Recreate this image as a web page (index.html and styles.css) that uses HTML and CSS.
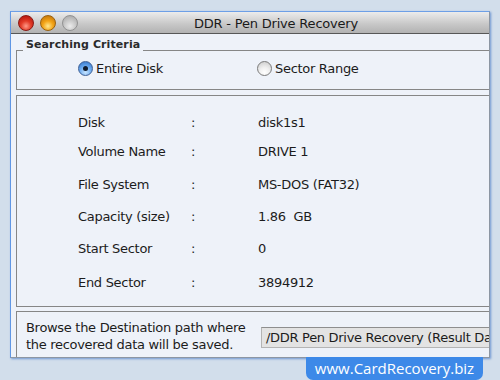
FILE: index.html
```html
<!DOCTYPE html>
<html>
<head>
<meta charset="utf-8">
<link rel="stylesheet" href="styles.css">
</head>
<body>
<div class="window">
  <div class="titlebar">
    <div class="lights">
      <span class="light red"></span>
      <span class="light orange"></span>
      <span class="light gray"></span>
    </div>
    <div class="title">DDR - Pen Drive Recovery</div>
  </div>
  <div class="content">
    <fieldset class="criteria">
      <legend>Searching Criteria</legend>
      <div class="radios">
        <label class="radio-item first"><span class="radio on"></span>Entire Disk</label>
        <label class="radio-item"><span class="radio"></span>Sector Range</label>
      </div>
    </fieldset>
    <div class="panel info">
      <div class="grid">
        <div>Disk</div><div>:</div><div>disk1s1</div>
        <div>Volume Name</div><div>:</div><div>DRIVE 1</div>
        <div>File System</div><div>:</div><div>MS-DOS (FAT32)</div>
        <div>Capacity (size)</div><div>:</div><div>1.86&nbsp; GB</div>
        <div>Start Sector</div><div>:</div><div>0</div>
        <div>End Sector</div><div>:</div><div>3894912</div>
      </div>
    </div>
    <div class="panel dest">
      <div class="dest-text">Browse the Destination path where<br>the recovered data will be saved.</div>
      <div class="path-field">/DDR Pen Drive Recovery (Result Da</div>
    </div>
  </div>
</div>
<div class="banner">www.CardRecovery.biz</div>
</body>
</html>
```
FILE: styles.css
```css
html, body {
  margin: 0;
  padding: 0;
}
body {
  width: 500px;
  height: 380px;
  overflow: hidden;
  background: #d2deeb;
  font-family: "DejaVu Sans", "Liberation Sans", sans-serif;
  font-size: 13px;
  letter-spacing: -0.3px;
  color: #1c1c1c;
  position: relative;
}
.window {
  margin: 11px 0 0 10px;
  width: 478px;
  height: 345px;
  border-top: 1px solid #6d9fe6;
  border-left: 1px solid #5f96e4;
  border-right: 1px solid #8c96a3;
  border-bottom: 1px solid #8c96a3;
  box-shadow: 1px 1px 2px rgba(70, 120, 200, 0.7);
  background: #eef2f9;
  display: flex;
  flex-direction: column;
  overflow: hidden;
}
.titlebar {
  height: 21px;
  flex: none;
  border-bottom: 1px solid #575757;
  background: linear-gradient(#ececec, #c9c9c9 55%, #b2b2b2);
  position: relative;
  display: flex;
  align-items: center;
  justify-content: center;
}
.lights {
  position: absolute;
  left: 7px;
  top: 3px;
  display: flex;
  gap: 6px;
}
.light {
  width: 16px;
  height: 16px;
  border-radius: 50%;
  box-sizing: border-box;
}
.light.red {
  background: radial-gradient(circle at 50% 72%, #ff9a88 0%, #e23a26 42%, #a80c08 100%);
  border: 1px solid #8a1a14;
}
.light.orange {
  background: radial-gradient(circle at 50% 72%, #ffe890 0%, #f3a417 42%, #b86a06 100%);
  border: 1px solid #9a6210;
}
.light.gray {
  background: radial-gradient(circle at 50% 72%, #ececec 0%, #c6c6c6 50%, #a0a0a0 100%);
  border: 1px solid #929292;
}
.title {
  font-size: 13px;
  color: #1a1a1a;
  letter-spacing: -0.2px;
  padding-top: 1px;
  padding-left: 52px;
}
.content {
  flex: 1;
  padding: 0 0 0 5px;
  display: flex;
  flex-direction: column;
}
.criteria {
  margin: 5px -2px 0 0;
  padding: 0;
  border: 1px solid #868686;
  border-right: none;
  height: 49px;
  box-sizing: content-box;
}
.criteria legend {
  font-size: 11px;
  font-weight: bold;
  color: #2a2a2a;
  line-height: 12px;
  padding: 0 3px 10px 3px;
  margin-left: 6px;
  letter-spacing: 0.1px;
}
.radios {
  display: flex;
  align-items: center;
  height: 38px;
  margin-top: -12px;
}
.radio-item {
  display: flex;
  align-items: center;
  gap: 3px;
}
.radio-item.first {
  margin-left: 61px;
  width: 179px;
}
.radio {
  width: 15px;
  height: 15px;
  border-radius: 50%;
  box-sizing: border-box;
  border: 1px solid #7a7a7a;
  background: radial-gradient(circle at 50% 80%, #ffffff 0%, #f0f0f0 40%, #c8c8c8 100%);
  position: relative;
}
.radio.on {
  border-color: #3d5f95;
  background: radial-gradient(circle at 50% 80%, #c6e4ff 0%, #6aa9ef 50%, #2d6fc4 100%);
}
.radio.on::after {
  content: "";
  position: absolute;
  left: 4px;
  top: 4px;
  width: 5px;
  height: 5px;
  border-radius: 50%;
  background: #111c2c;
}
.panel {
  border: 1px solid #868686;
  border-right: none;
  margin-right: -2px;
}
.info {
  margin-top: 5px;
  height: 212px;
  padding: 12px 0 0 61px;
  box-sizing: border-box;
}
.grid {
  display: grid;
  grid-template-columns: 113px 67px auto;
  grid-template-rows: 28px 31px 34px 31px 33px 34px;
  align-items: center;
}
.dest {
  margin-top: 4px;
  flex: 1;
  border-bottom: none;
  display: flex;
  align-items: flex-start;
  padding-left: 9px;
  padding-top: 7px;
}
.dest-text {
  width: 235px;
  line-height: 17px;
  flex: none;
}
.path-field {
  flex: none;
  width: 240px;
  height: 21px;
  margin-top: 8px;
  box-sizing: border-box;
  background: #e3e3e3;
  border: 1px solid #b4b4b4;
  border-top-color: #8e8e8e;
  padding-left: 4px;
  line-height: 19px;
  white-space: nowrap;
  overflow: hidden;
}
.banner {
  position: absolute;
  left: 306px;
  top: 357px;
  width: 177px;
  height: 23px;
  background: #3d89e8;
  border-radius: 0 0 7px 7px;
  color: #ffffff;
  font-family: "Open Sans", "DejaVu Sans", sans-serif;
  font-size: 15px;
  letter-spacing: 0;
  line-height: 23px;
  text-align: center;
}
```
